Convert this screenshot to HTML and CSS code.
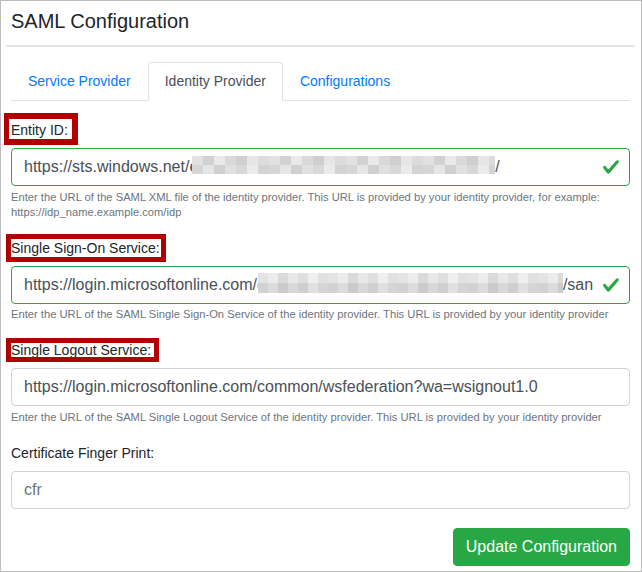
FILE: index.html
```html
<!DOCTYPE html>
<html lang="en">
<head>
<meta charset="utf-8">
<title>SAML Configuration</title>
<link rel="stylesheet" href="styles.css">
</head>
<body>
<div class="page">
  <div class="header">
    <h1 class="title">SAML Configuration</h1>
  </div>
  <div class="content">
    <ul class="tabs">
      <li><a class="tab">Service Provider</a></li>
      <li><a class="tab active">Identity Provider</a></li>
      <li><a class="tab">Configurations</a></li>
    </ul>
    <form class="form">
      <div class="group">
        <label class="label mark mark-entity">Entity ID:</label>
        <div class="field">
          <div class="control valid"><span class="value">https://sts.windows.net/e<span class="redact redact-entity"></span>/</span></div>
          <svg class="check" viewBox="0 0 8 8" width="18" height="18"><path fill="#28a745" d="M2.3 6.73L.6 4.53c-.4-1.04.46-1.4 1.1-.8l1.1 1.4 3.4-3.8c.6-.63 1.6-.27 1.2.7l-4 4.6c-.43.5-.8.4-1.1.1z"/></svg>
        </div>
        <small class="help">Enter the URL of the SAML XML file of the identity provider. This URL is provided by your identity provider, for example: https://idp_name.example.com/idp</small>
      </div>
      <div class="group">
        <label class="label mark mark-sso">Single Sign-On Service:</label>
        <div class="field">
          <div class="control valid"><span class="value">https://login.microsoftonline.com/e<span class="redact redact-sso"></span>/san</span></div>
          <svg class="check" viewBox="0 0 8 8" width="18" height="18"><path fill="#28a745" d="M2.3 6.73L.6 4.53c-.4-1.04.46-1.4 1.1-.8l1.1 1.4 3.4-3.8c.6-.63 1.6-.27 1.2.7l-4 4.6c-.43.5-.8.4-1.1.1z"/></svg>
        </div>
        <small class="help">Enter the URL of the SAML Single Sign-On Service of the identity provider. This URL is provided by your identity provider</small>
      </div>
      <div class="group">
        <label class="label mark mark-logout">Single Logout Service:</label>
        <div class="field">
          <input class="control" type="text" value="https://login.microsoftonline.com/common/wsfederation?wa=wsignout1.0">
        </div>
        <small class="help">Enter the URL of the SAML Single Logout Service of the identity provider. This URL is provided by your identity provider</small>
      </div>
      <div class="group group-last">
        <label class="label">Certificate Finger Print:</label>
        <div class="field">
          <input class="control" type="text" placeholder="cfr">
        </div>
      </div>
      <div class="actions">
        <button type="button" class="btn">Update Configuration</button>
      </div>
    </form>
  </div>
</div>
</body>
</html>
```
FILE: styles.css
```css
*, *::before, *::after { box-sizing: border-box; }

html, body {
  margin: 0;
  padding: 0;
  background: #fff;
}

body {
  font-family: "Liberation Sans", Arial, sans-serif;
  font-size: 14px;
  line-height: 21px;
  color: #212529;
}

.page {
  width: 642px;
  height: 572px;
  border: 1px solid #bdbdbd;
  overflow: hidden;
}

.header {
  margin: 0 6px 0 5px;
  padding: 8px 0 12px;
  border-bottom: 2px solid #e3e6e9;
}

.title {
  margin: 0 0 0 5px;
  font-size: 20px;
  line-height: 24px;
  font-weight: 400;
  color: #212529;
}

.content {
  margin: 15px 11px 0 10px;
}

.tabs {
  list-style: none;
  margin: 0;
  padding: 0;
  display: flex;
  border-bottom: 1px solid #dee2e6;
}

.tabs li {
  margin-bottom: -1px;
}

.tab {
  display: block;
  padding: 8px 16px;
  border: 1px solid transparent;
  border-radius: 4px 4px 0 0;
  color: #007bff;
  text-decoration: none;
  cursor: pointer;
}

.tab.active {
  color: #495057;
  background: #fff;
  border-color: #dee2e6 #dee2e6 #fff;
}

.form {
  margin-top: 19px;
}

.group {
  margin-bottom: 18px;
}

.group-last {
  margin-bottom: 19.5px;
}

.label {
  display: inline-block;
  margin-bottom: 7px;
  position: relative;
  z-index: 2;
}

.mark::before {
  content: "";
  position: absolute;
  border: 5px solid #b20000;
  pointer-events: none;
}

.mark-entity::before {
  left: -7px;
  top: -7px;
  width: 74px;
  height: 32px;
  border-width: 6px 6px 6px 5px;
}

.mark-sso::before {
  left: -5px;
  top: -4px;
  width: 160px;
  height: 28px;
}

.mark-logout::before {
  left: -5px;
  top: -2px;
  width: 153px;
  height: 24px;
}

.field {
  position: relative;
}

.control {
  display: block;
  width: 100%;
  height: 38px;
  padding: 6px 12px;
  font-family: "Liberation Sans", Arial, sans-serif;
  font-size: 16px;
  line-height: 24px;
  color: #495057;
  background: #fff;
  border: 1px solid #ced4da;
  border-radius: 4px;
  outline: none;
  margin: 0;
}

.control::placeholder {
  color: #6c757d;
  opacity: 1;
}

.control.valid {
  border-color: #28a745;
  padding-right: 36px;
}

.value {
  display: block;
  white-space: nowrap;
  overflow: hidden;
}

.check {
  position: absolute;
  right: 10px;
  top: 10px;
  display: block;
}

.redact {
  display: inline-block;
  vertical-align: top;
  position: relative;
}

.redact-entity {
  width: 303px;
  height: 18px;
  margin-top: 1px;
  margin-left: -6px;
  background:
    repeating-linear-gradient(90deg, #e2e2e2 0 11px, #d2d2d2 11px 22px, #e9e9e9 22px 33px, #d9d9d9 33px 44px, #cfcfcf 44px 55px, #e6e6e6 55px 66px, #dcdcdc 66px 77px) top / 100% 9px no-repeat,
    repeating-linear-gradient(90deg, #d6d6d6 0 11px, #e5e5e5 11px 22px, #d0d0d0 22px 33px, #e0e0e0 33px 44px, #d8d8d8 44px 55px, #ebebeb 55px 66px, #d3d3d3 66px 77px) bottom / 100% 9px no-repeat;
}

.redact-sso {
  width: 305px;
  height: 20px;
  margin-left: -8px;
  background:
    repeating-linear-gradient(90deg, #e4e4e4 0 10px, #ececec 10px 20px, #dadada 20px 30px, #e8e8e8 30px 40px, #dfdfdf 40px 50px, #efefef 50px 60px, #e1e1e1 60px 70px) top / 100% 10px no-repeat,
    repeating-linear-gradient(90deg, #d2d2d2 0 10px, #dcdcdc 10px 20px, #cbcbcb 20px 30px, #d8d8d8 30px 40px, #cfcfcf 40px 50px, #e0e0e0 50px 60px, #d5d5d5 60px 70px) bottom / 100% 10px no-repeat;
}

.help {
  display: block;
  margin-top: 3.5px;
  font-size: 11.2px;
  line-height: 15px;
  color: #6c757d;
}

.actions {
  display: flex;
  justify-content: flex-end;
}

.btn {
  font-family: "Liberation Sans", Arial, sans-serif;
  font-size: 16px;
  line-height: 24px;
  padding: 6px 12px;
  color: #fff;
  background: #28a745;
  border: 1px solid #28a745;
  border-radius: 4px;
  cursor: pointer;
}
```
